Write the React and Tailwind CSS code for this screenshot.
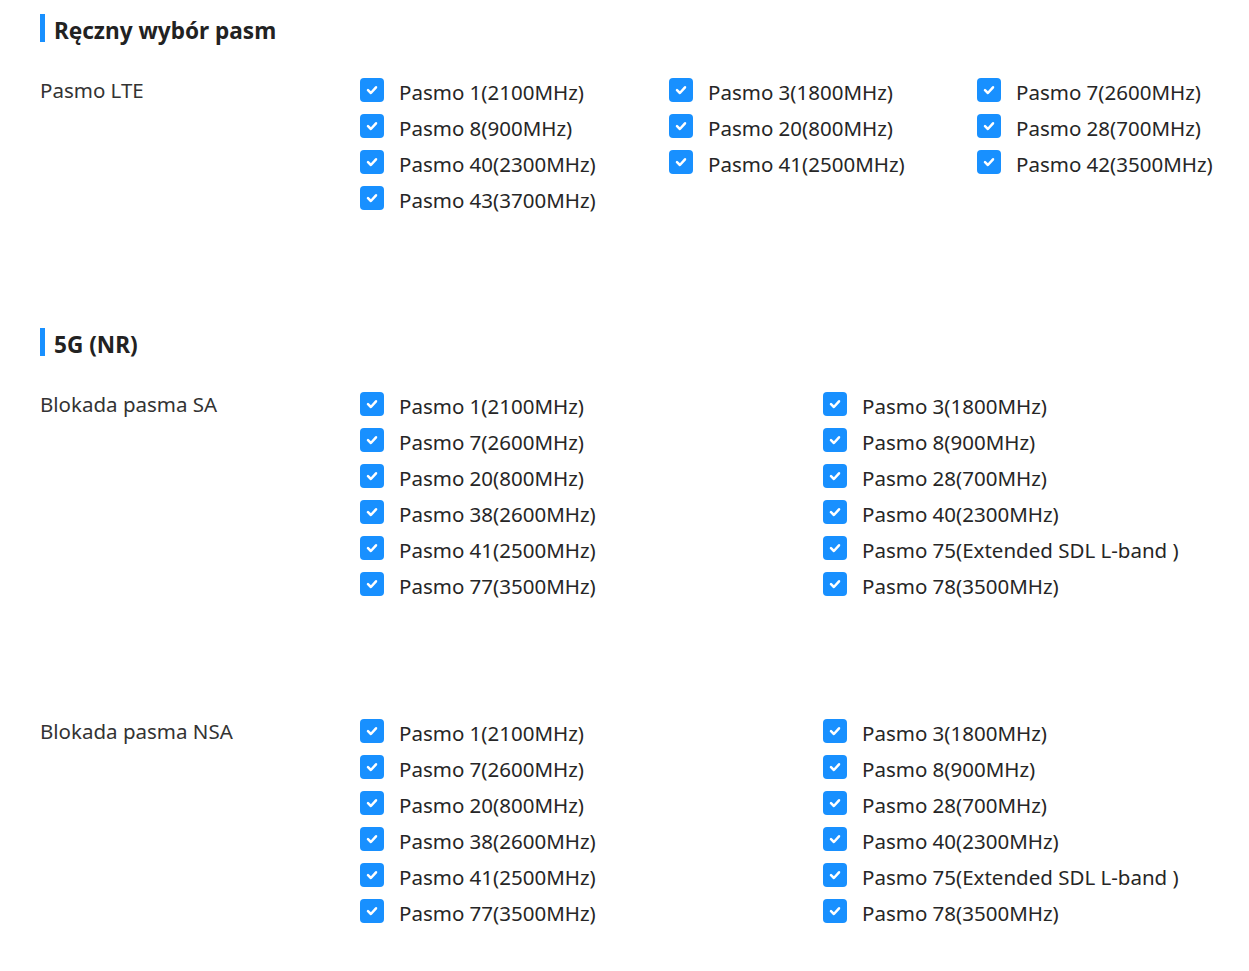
import React from "react";

const Check = () => (
  <span className="flex h-6 w-6 shrink-0 items-center justify-center rounded-[4px] bg-[#1890ff]">
    <svg width="14" height="14" viewBox="0 0 14 14" fill="none">
      <path d="M3 7.2 L5.9 10 L11 4.3" stroke="white" strokeWidth="2.5" strokeLinecap="round" strokeLinejoin="round" />
    </svg>
  </span>
);

const Item = ({ label }) => (
  <div className="flex h-9 items-center">
    <div className="-mt-[4px]"><Check /></div>
    <span className="ml-[15px] mt-[1px] whitespace-nowrap text-[20.5px] text-[#262626]">{label}</span>
  </div>
);

const Header = ({ title }) => (
  <div className="flex h-7 items-center">
    <div className="h-7 w-[5px] bg-[#1890ff]" />
    <h2 className="ml-[9px] mt-[5px] text-[22.6px] font-bold text-[#222]">{title}</h2>
  </div>
);

const Row = ({ label, cols, items }) => (
  <div className="flex">
    <div className="w-[320px] shrink-0 pt-[2px] text-[20.5px] leading-7 text-[#333]">{label}</div>
    <div className={cols}>
      {items.map((t) => (
        <Item key={t} label={t} />
      ))}
    </div>
  </div>
);

const lte = [
  "Pasmo 1(2100MHz)", "Pasmo 3(1800MHz)", "Pasmo 7(2600MHz)",
  "Pasmo 8(900MHz)", "Pasmo 20(800MHz)", "Pasmo 28(700MHz)",
  "Pasmo 40(2300MHz)", "Pasmo 41(2500MHz)", "Pasmo 42(3500MHz)",
  "Pasmo 43(3700MHz)",
];

const nr = [
  "Pasmo 1(2100MHz)", "Pasmo 3(1800MHz)",
  "Pasmo 7(2600MHz)", "Pasmo 8(900MHz)",
  "Pasmo 20(800MHz)", "Pasmo 28(700MHz)",
  "Pasmo 38(2600MHz)", "Pasmo 40(2300MHz)",
  "Pasmo 41(2500MHz)", "Pasmo 75(Extended SDL L-band )",
  "Pasmo 77(3500MHz)", "Pasmo 78(3500MHz)",
];

export default function App() {
  return (
    <div
      className="h-[971px] w-[1249px] overflow-hidden bg-white pl-10 pt-[14px]"
      style={{ fontFamily: '"Noto Sans", "Open Sans", sans-serif' }}
    >
      <Header title="Ręczny wybór pasm" />
      <div className="mt-8">
        <Row label="Pasmo LTE" cols="grid grid-cols-[309px_308px_1fr]" items={lte} />
      </div>
      <div className="mt-[110px]">
        <Header title="5G (NR)" />
      </div>
      <div className="mt-8">
        <Row label="Blokada pasma SA" cols="grid grid-cols-[463px_1fr]" items={nr} />
      </div>
      <div className="mt-[111px]">
        <Row label="Blokada pasma NSA" cols="grid grid-cols-[463px_1fr]" items={nr} />
      </div>
    </div>
  );
}
